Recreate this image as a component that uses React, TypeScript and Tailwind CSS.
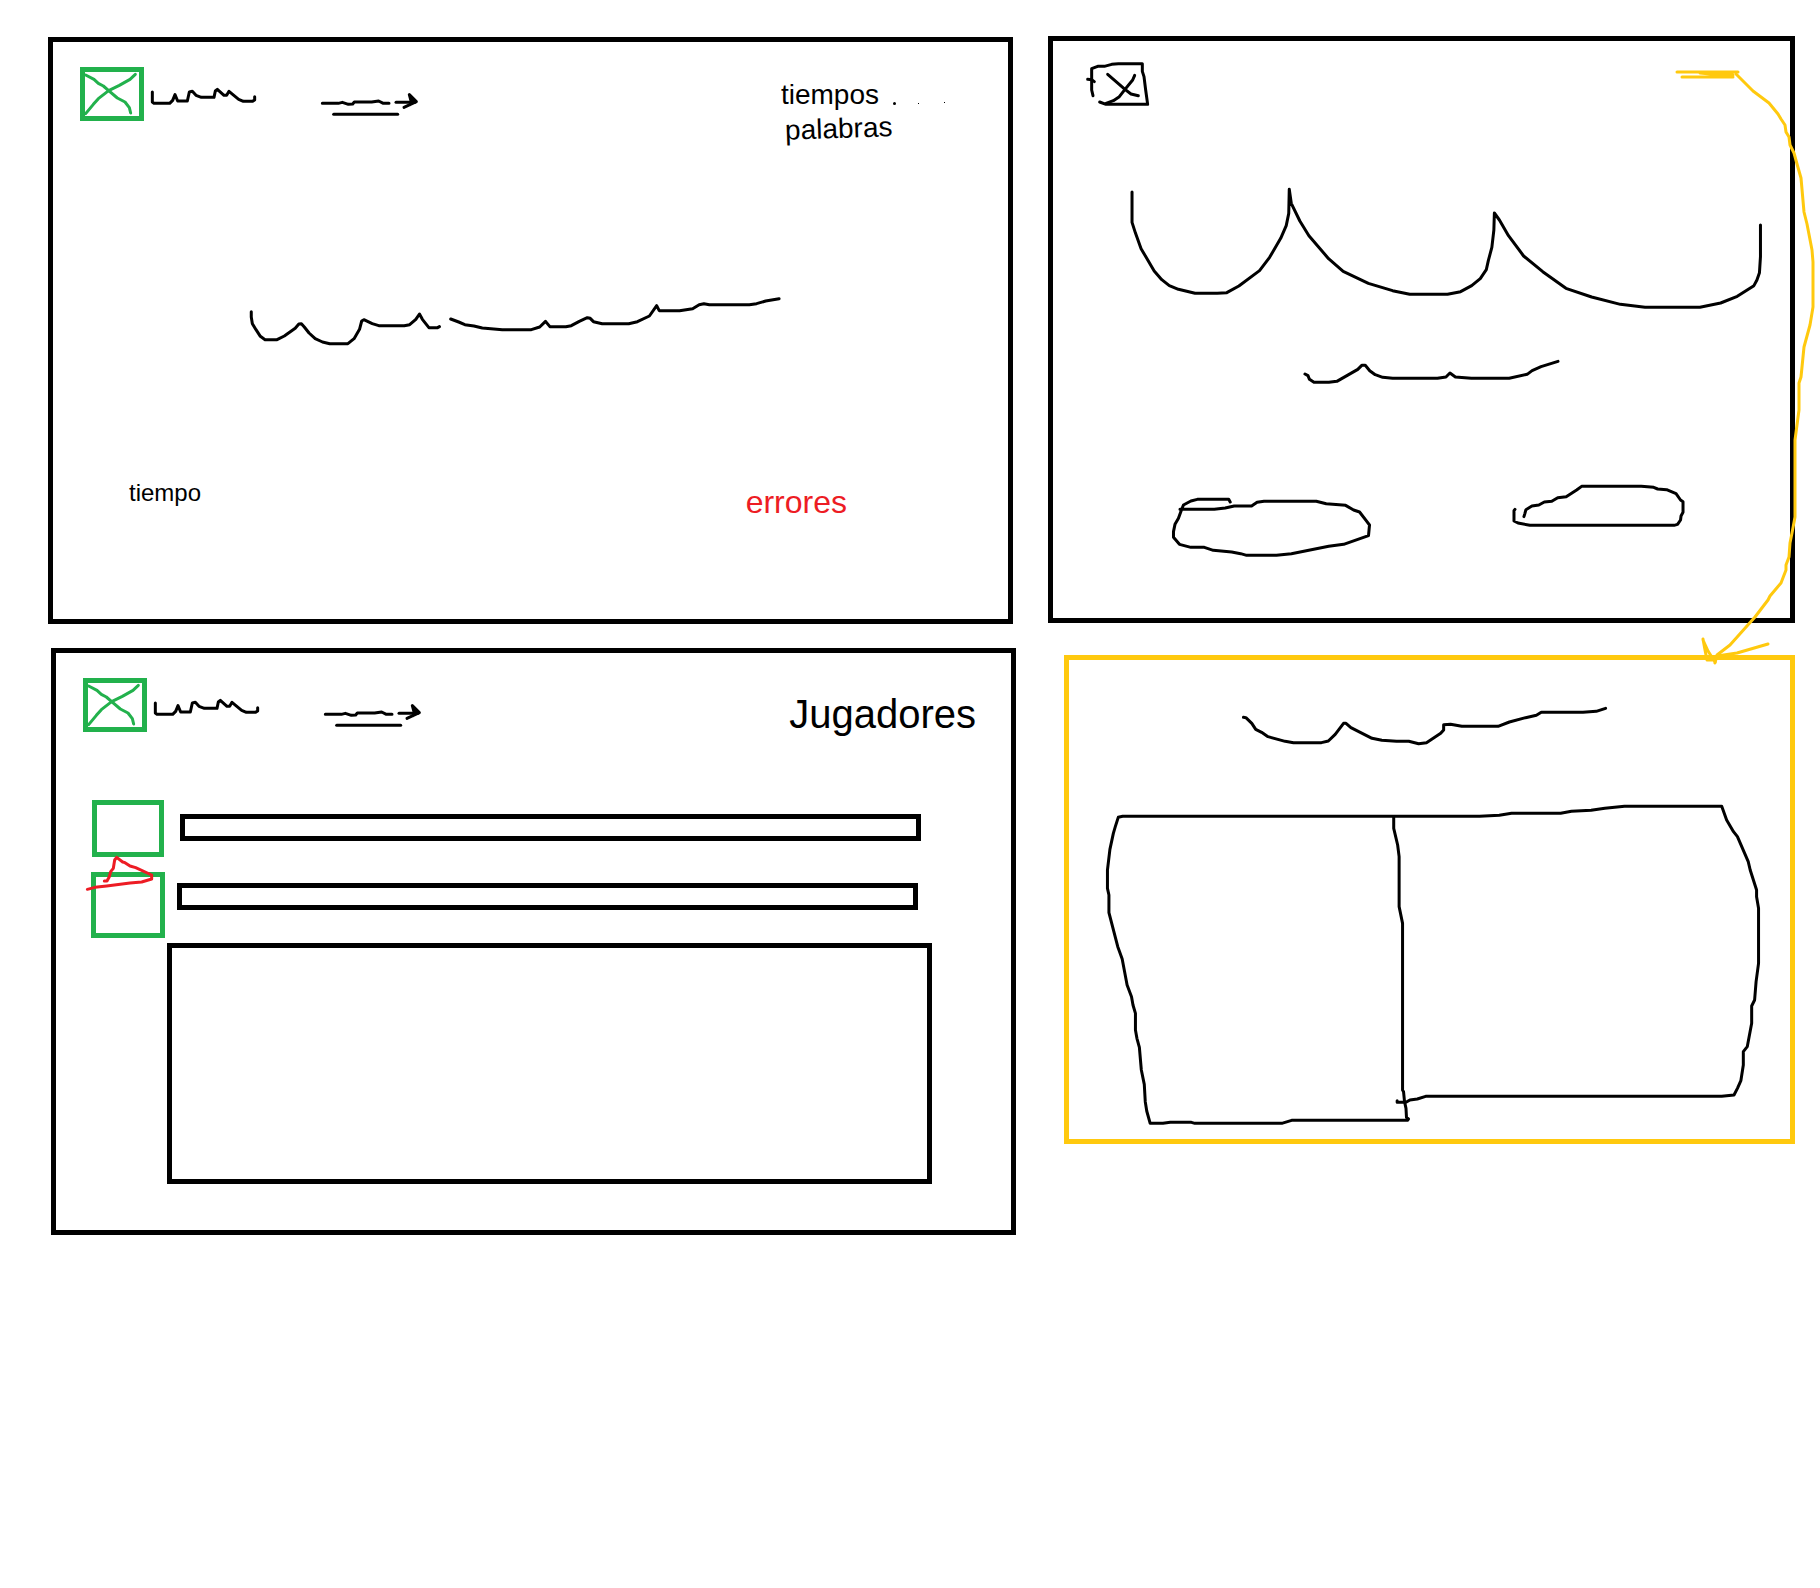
import type { ReactNode } from "react";

type SketchProps = {
  box: string;
  paths: string[];
  className: string;
};

/* Freehand pen strokes, three pixels thick whatever the drawing's scale. */
function Sketch({ box, paths, className }: SketchProps) {
  return (
    <svg
      viewBox={box}
      preserveAspectRatio="none"
      fill="none"
      stroke="currentColor"
      strokeWidth={3}
      strokeLinecap="round"
      strokeLinejoin="round"
      aria-hidden="true"
      className={"block shrink-0 overflow-visible " + className}
    >
      {paths.map((d) => (
        <path key={d} d={d} vectorEffect="non-scaling-stroke" />
      ))}
    </svg>
  );
}

function Panel({ className, children }: { className: string; children: ReactNode }) {
  return <section className={"border-5 " + className}>{children}</section>;
}

function ScreenHeader({ children }: { children: ReactNode }) {
  return (
    <header className="flex items-start">
      <div className="h-[54px] w-16 shrink-0 border-5 border-[#22b14c] text-[#22b14c]">
        <Sketch
          box="165 156 162 132"
          className="h-full w-full"
          paths={[
            "M167 165L192 178L205 190L220 198L236 212L262 234L285 246L298 263L302 279",
            "M316 163L300 178L268 196L236 212L205 236L190 253L167 281",
          ]}
        />
      </div>
      <Sketch
        box="360 141 324 162"
        className="ml-1.5 h-[54px] w-[108px]"
        paths={[
          "M367 216V246L372 250H419L428 241L435 224L443 243H472L478 216L487 214L498 226L514 232H552L556 213L562 208L582 226L590 226L597 214L626 238L640 244H667L674 240V230",
        ]}
      />
      <Sketch
        box="870 141 300 162"
        className="ml-[62px] h-[54px] w-[100px]"
        paths={[
          "M877 250H925L937 247L955 253L968 252L973 246H1025L1046 243L1060 250H1077",
          "M1098 247H1155",
          "M1138 224L1159 245L1122 262M1138 224L1144 246L1140 254M1144 234L1150 246",
          "M911 283H1103",
        ]}
      />
      <div className="ml-auto">{children}</div>
    </header>
  );
}

function TypingScreen() {
  return (
    <Panel className="mr-[3px] border-black px-[27px] pt-[25px] pb-[101px]">
      <ScreenHeader>
        <div className="mt-3 mr-9 text-[28px] leading-8">
          <div className="flex items-end">
            <p>tiempos</p>
            <span className="mb-1.5 ml-3.5 size-[3px] rounded-full bg-black" />
            <span className="mb-[7px] ml-[22px] size-px bg-black" />
            <span className="mb-2 ml-[25px] size-px bg-black" />
          </div>
          <p className="mt-0.5 ml-1 w-fit -rotate-2">palabras</p>
        </div>
      </ScreenHeader>
      <Sketch
        box="50 80 1470 150"
        className="mt-[152px] ml-[168px] h-[50px] w-[534px]"
        paths={[
          "M59 124V140L62 160L72 178L84 198L97 208H130L150 197L180 174L190 161L197 160L205 170L218 188L235 205L255 215L275 220H325L342 205L357 177L363 152L369 148L392 160L410 166H480L495 163L512 147L522 131L530 147L548 172H572L577 169",
          "M608 146L630 155L647 163L672 167L695 173L750 178H830L853 170L869 153L881 169H925L940 166L962 153L984 142L992 144L1001 154L1025 160H1098L1122 154L1155 137L1175 106L1182 121H1238L1274 115L1292 103L1305 100L1320 103H1430L1450 100L1475 92L1512 85",
        ]}
      />
      <footer className="mt-[129px] mr-[134px] ml-[49px] flex items-start justify-between">
        <p className="mt-px text-2xl leading-8">tiempo</p>
        <p className="mt-2.5 text-[32px] leading-8 text-[#ed1c24]">errores</p>
      </footer>
    </Panel>
  );
}

function PlayersScreen() {
  return (
    <Panel className="ml-[3px] border-black px-[27px] pt-[25px] pb-[46px]">
      <ScreenHeader>
        <h2 className="mt-4 mr-2 text-[40px] leading-10">Jugadores</h2>
      </ScreenHeader>
      <div className="mt-[66px] mr-[63px] ml-[9px] flex items-start gap-4">
        <div className="h-[57px] w-[72px] shrink-0 border-5 border-[#22b14c]" />
        <div className="mt-3.5 h-[27px] flex-1 border-5 border-black" />
      </div>
      <div className="mt-[15px] mr-[66px] ml-2 flex items-start gap-3">
        <div className="relative h-[66px] w-[74px] shrink-0 border-5 border-[#22b14c]">
          <div className="absolute -top-[22px] -left-[11px] text-[#ed1c24]">
            <Sketch
              box="45 225 210 111"
              className="h-[37px] w-[70px]"
              paths={[
                "M103 303L111 303L118 290L122 275L130 265L134 240L140 232L158 246L165 248L180 258L197 263L245 285V297L215 306L180 309L110 318L75 322L52 328",
              ]}
            />
          </div>
        </div>
        <div className="mt-[11px] h-[27px] flex-1 border-5 border-black" />
      </div>
      <div className="mt-[5px] mr-[52px] ml-[84px] h-[241px] border-5 border-black" />
    </Panel>
  );
}

function StartScreen() {
  return (
    <Panel className="border-black pt-5 pb-[61px]">
      <Sketch
        box="48 63 192 138"
        className="ml-[33px] h-[46px] w-16"
        paths={[
          "M69 167L65 150V86L83 79L103 79L125 73L145 71H217V94L222 110L227 150L233 193H108L89 186",
          "M53 118L65 119L73 125",
          "M113 103L165 148L183 162L205 167",
          "M194 106L188 120L165 148L148 170L130 182L108 190",
        ]}
      />
      <Sketch
        box="197 498 1262 372"
        className="mt-[79px] ml-[76px] h-[124px] w-[636px]"
        paths={[
          "M203 516V607L210 640L221 686L247 753L262 779L277 797L295 808L328 820H372L391 818L415 798L456 752L476 712L498 655L509 617L514 580L515 508L519 550L536 603L554 647L593 716L622 754L672 790L720 812L754 823H829L855 815L877 797L894 776L906 749L910 722L917 682L921 630L922 579L932 600L950 647L980 708L1018 755L1064 805L1115 831L1172 853L1221 862H1330L1371 849L1404 829L1437 797L1443 780L1448 758L1450 710V615",
        ]}
      />
      <Sketch
        box="528 57 520 75"
        className="mt-[49px] ml-[249px] h-[25px] w-[259px]"
        paths={[
          "M534 102L540 107L543 118L552 127H582L598 124L640 88L648 76L655 76L664 92L675 104L690 112L710 115H800L817 111L825 99L836 111L868 115H944L980 103L990 92L1008 80L1042 64",
        ]}
      />
      <div className="mt-[100px] ml-[118px] flex items-start gap-[141px]">
        <button type="button" aria-label="Primera opción" className="mt-[13px]">
          <Sketch
            box="263 471 402 180"
            className="h-[60px] w-[200px]"
            paths={[
              "M382 486L379 478H316L303 483L288 495L284 510L278 535L271 553L268 575V592L280 613L303 622H330L348 631L385 636L403 641L415 646H475L505 641L580 619L610 613L660 587L662 555L655 541L642 516L630 510L614 496L575 491L555 484H450L436 487L425 498H390L372 504L350 508H281",
            ]}
          />
        </button>
        <button type="button" aria-label="Segunda opción">
          <Sketch
            box="948 432 350 129"
            className="h-[43px] w-[174px]"
            paths={[
              "M954 508L952 512V543L960 549L984 556H1274L1281 553L1287 540L1288 528L1292 517V485L1287 480L1278 461L1259 449L1241 447L1233 442L1208 439H1088L1078 450L1057 470L1040 473L1028 484L1013 486L1002 495L988 498L976 509L974 520L972 530",
            ]}
          />
        </button>
      </div>
    </Panel>
  );
}

function DetailScreen() {
  return (
    <Panel className="ml-4 border-[#ffc90e] pt-[46px] pb-3.5">
      <Sketch
        box="388 198 750 120"
        className="ml-[172px] h-10 w-[368px]"
        paths={[
          "M393 232L398 233L410 250L418 268L430 277L443 290L478 304L495 308H552L566 303L580 283L597 250L602 250L612 263L655 295L675 301L705 304H730L750 311L766 308L795 280L801 270V254L815 253L838 259H912L935 246L968 233L990 226L1000 217H1085L1112 214L1131 205",
        ]}
      />
      <Sketch
        box="112 492 1336 963"
        className="mt-[58px] ml-9 h-[321px] w-[656px]"
        paths={[
          "M700 529H148L139 532L133 560L129 580L122 628L117 690V745L120 765V818L138 920L147 957L157 1035L166 1070L169 1095L174 1120V1170L177 1195L182 1222L186 1290L192 1333L194 1385L197 1413L204 1450H230L245 1447H288L295 1450H472L492 1441H728L730 1437L726 1432L725 1405L722 1385L720 1355L718 1350V850L711 800V650L708 615L700 565V529H875L915 526L940 520H1040L1062 514L1102 511L1130 505L1170 499H1368L1378 540L1392 575L1400 590L1422 665L1426 690L1439 750V770L1443 805V970L1438 1025L1435 1080L1429 1098V1150L1420 1220L1412 1235V1275L1407 1322L1400 1345L1393 1365L1368 1369H765L748 1377L733 1380L725 1387H707V1382",
        ]}
      />
    </Panel>
  );
}

/* Link from the start screen's corner action down to the detail screen. */
function ConnectorArrow() {
  return (
    <div className="pointer-events-none absolute top-6 -right-[25px] text-[#ffc90e]">
      <Sketch
        box="1670 60 150 610"
        className="h-[610px] w-[150px]"
        paths={[
          "M1677 72H1738M1682 77H1733M1700 73L1731 76M1712 73L1733 75",
          "M1736 74L1753 91L1769 103L1778 114L1781 119L1785 125L1786 132L1789 137L1790 145L1794 153L1797 164L1801 178L1804 212L1807 224L1812 250L1813 262V307L1810 325L1804 347L1801 377L1799 383V410L1795 440V517L1792 533L1790 543L1789 557L1786 565V570L1781 583L1770 596L1768 600L1755 617L1730 645L1717 655L1715 663",
          "M1703 639L1705 650L1707 660H1713M1703 640L1708 651L1715 662M1768 644L1737 653L1717 656",
        ]}
      />
    </div>
  );
}

export default function App() {
  return (
    <main className="min-h-screen overflow-x-hidden bg-white pt-9 pr-[25px] pb-12 pl-12 font-['Liberation_Sans',sans-serif] text-black">
      <div className="grid grid-cols-[968fr_747fr] items-start gap-8">
        <div className="flex flex-col gap-6 pt-px">
          <TypingScreen />
          <PlayersScreen />
        </div>
        <div className="relative flex flex-col gap-8">
          <StartScreen />
          <DetailScreen />
          <ConnectorArrow />
        </div>
      </div>
    </main>
  );
}
